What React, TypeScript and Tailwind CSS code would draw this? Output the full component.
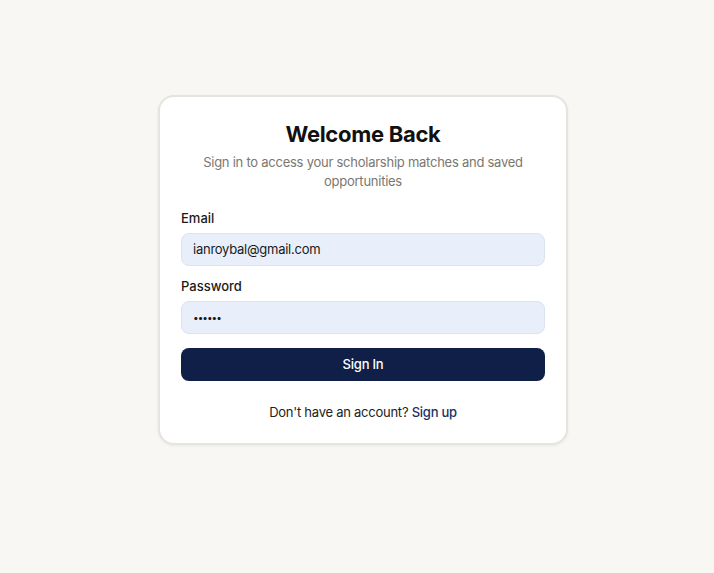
import React from "react";

export default function App() {
  return (
    <div
      className="min-h-[573px] w-full bg-[#f8f7f4] flex justify-center pt-[95px] pl-[12px]"
      style={{ fontFamily: "Inter, 'Noto Sans', sans-serif" }}
    >
      <div className="w-[410px] h-[350px] bg-white rounded-[16px] border-2 border-[#e6e4df] shadow-[0_1px_3px_rgba(0,0,0,0.06)] px-[21px] pt-[23px] flex flex-col">
        <h1 className="text-center text-[22px] leading-[28px] font-bold text-[#111] tracking-[-0.3px]">
          Welcome Back
        </h1>
        <p className="mt-[5px] text-center text-[13px] leading-[19px] text-[#7b776f] tracking-[-0.25px] px-[18px]">
          Sign in to access your scholarship matches and saved opportunities
        </p>
        <label className="mt-[18px] text-[13px] leading-[18px] font-medium text-[#1a1a1a]">
          Email
        </label>
        <div className="mt-[6px] h-[33px] rounded-[8px] bg-[#e8effb] border border-[#dbe3ef] flex items-center px-[11px] text-[13px] tracking-[-0.25px] text-[#1a1a1a]">
          ianroybal@gmail.com
        </div>
        <label className="mt-[11px] text-[13px] leading-[18px] font-medium text-[#1a1a1a]">
          Password
        </label>
        <div className="mt-[6px] h-[33px] rounded-[8px] bg-[#e8effb] border border-[#dbe3ef] flex items-center px-[11px] text-[10px] tracking-[-1px] text-[#1a1a1a]">
          ••••••
        </div>
        <button className="mt-[14px] h-[33px] rounded-[8px] bg-[#0f1f47] text-white text-[13px] tracking-[-0.2px] font-medium flex items-center justify-center">
          Sign In
        </button>
        <p className="mt-[22px] text-center text-[13px] tracking-[-0.25px] text-[#222]">
          Don't have an account?{" "}
          <span className="text-[#1c3163] font-medium">Sign up</span>
        </p>
      </div>
    </div>
  );
}
